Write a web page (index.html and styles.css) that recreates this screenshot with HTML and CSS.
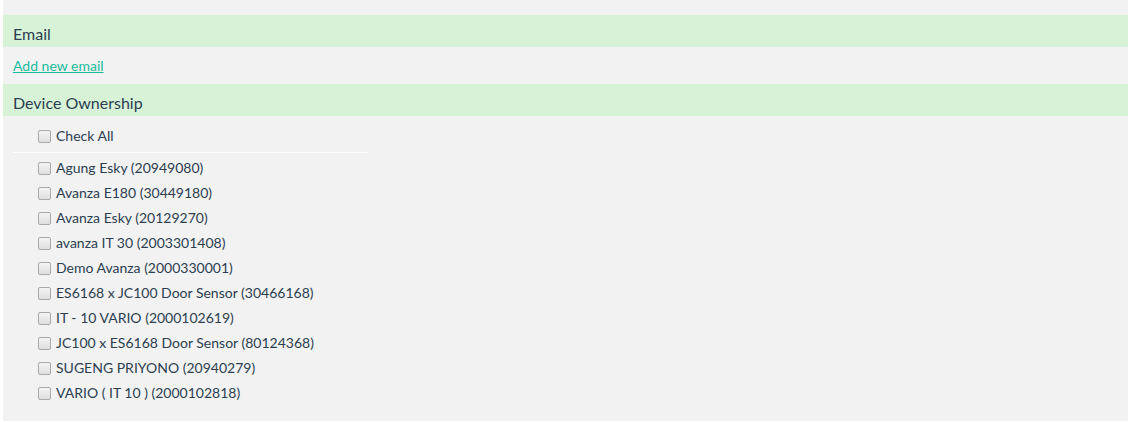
FILE: index.html
```html
<!DOCTYPE html>
<html>
<head>
<meta charset="utf-8">
<link rel="stylesheet" href="styles.css">
</head>
<body>
<div class="panel">
  <div class="section-head">Email</div>
  <div class="link-row"><a href="#" class="add-link">Add new email</a></div>
  <div class="section-head">Device Ownership</div>
  <div class="devices">
    <label class="row"><input type="checkbox" class="cb"><span>Check All</span></label>
    <div class="sep"></div>
    <label class="row"><input type="checkbox" class="cb"><span>Agung Esky (20949080)</span></label>
    <label class="row"><input type="checkbox" class="cb"><span>Avanza E180 (30449180)</span></label>
    <label class="row"><input type="checkbox" class="cb"><span>Avanza Esky (20129270)</span></label>
    <label class="row"><input type="checkbox" class="cb"><span>avanza IT 30 (2003301408)</span></label>
    <label class="row"><input type="checkbox" class="cb"><span>Demo Avanza (2000330001)</span></label>
    <label class="row"><input type="checkbox" class="cb"><span>ES6168 x JC100 Door Sensor (30466168)</span></label>
    <label class="row"><input type="checkbox" class="cb"><span>IT - 10 VARIO (2000102619)</span></label>
    <label class="row"><input type="checkbox" class="cb"><span>JC100 x ES6168 Door Sensor (80124368)</span></label>
    <label class="row"><input type="checkbox" class="cb"><span>SUGENG PRIYONO (20940279)</span></label>
    <label class="row"><input type="checkbox" class="cb"><span>VARIO ( IT 10 ) (2000102818)</span></label>
  </div>
</div>
</body>
</html>
```
FILE: styles.css
```css
html, body {
  margin: 0;
  padding: 0;
  background: #ffffff;
}
body {
  font-family: Lato, "Open Sans", sans-serif;
  color: #2c3e50;
}
.panel {
  margin-left: 3px;
  height: 421px;
  background: #f2f2f2;
  padding-top: 15px;
  box-sizing: border-box;
}
.section-head {
  height: 32px;
  background: #d8f2d8;
  padding-left: 10px;
  font-size: 16px;
  line-height: 38px;
  color: #2c3e50;
  overflow: hidden;
}
.link-row {
  height: 37px;
  padding-left: 10px;
  display: flex;
  align-items: center;
}
.add-link {
  color: #18bc9c;
  font-size: 14px;
  text-decoration: underline;
}
.devices {
  padding-top: 8px;
  display: flex;
  flex-direction: column;
}
.row {
  height: 25px;
  display: flex;
  align-items: center;
  padding-left: 35px;
  font-size: 14px;
  color: #2c3e50;
}
.row span {
  position: relative;
  top: -1px;
}
.cb {
  appearance: none;
  -webkit-appearance: none;
  width: 13px;
  height: 13px;
  margin: 0 5px 0 0;
  border: 1px solid #a9a9a9;
  border-radius: 2px;
  background: linear-gradient(#f4f4f4, #dedede);
  box-sizing: border-box;
}
.sep {
  margin: 3px 0 3px 10px;
  width: 355px;
  height: 1px;
  background: #ffffff;
}
```
